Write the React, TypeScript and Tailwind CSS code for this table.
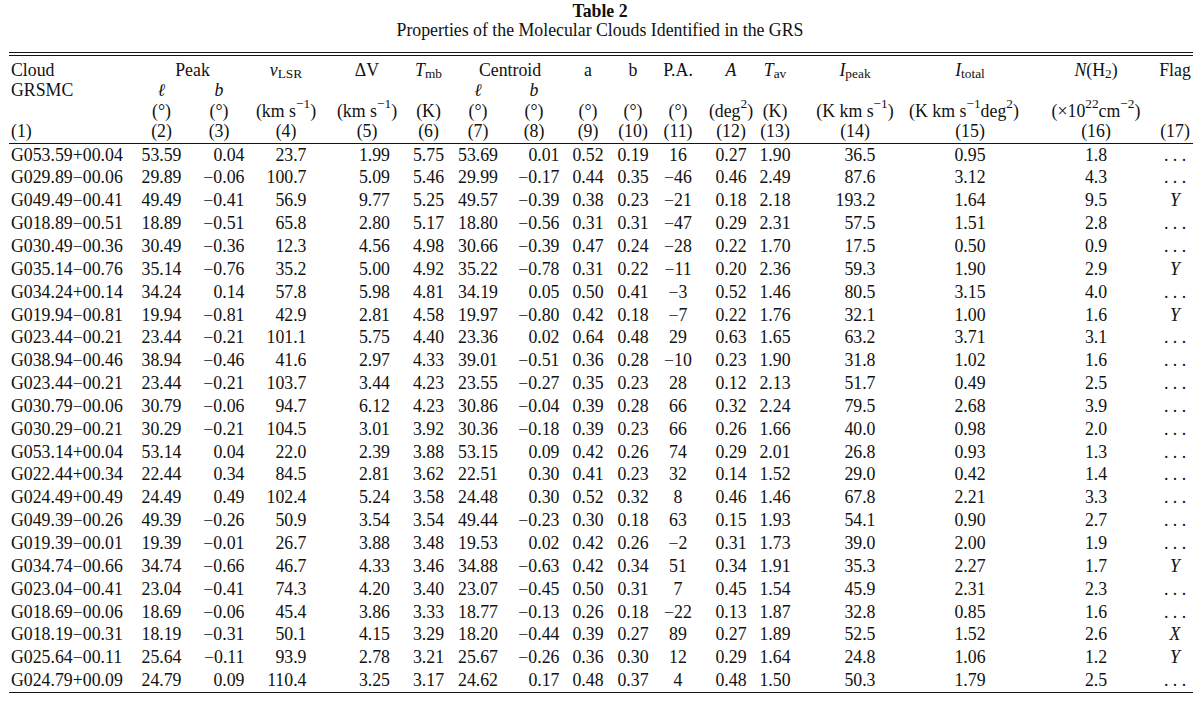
import type { ReactNode } from "react";

// column geometry: cell width + shift padding, optional fixed box for right-aligned numbers
const cols = [
  { cell: "w-[130px] pl-[11px] justify-start" },
  { cell: "w-[60px] pl-[3px] justify-center" },
  { cell: "w-[62px] pr-[4px] justify-center", box: "w-[51px]" },
  { cell: "w-[74px] pr-[6px] justify-center", box: "w-[41px]" },
  { cell: "w-[72px] pl-[10px] justify-center", box: "w-[46px]" },
  { cell: "w-[55px] pl-[6px] justify-center" },
  { cell: "w-[53px] pr-[3px] justify-center" },
  { cell: "w-[55px] pl-[1px] justify-center", box: "w-[51px]" },
  { cell: "w-[49px] pl-[5px] justify-center" },
  { cell: "w-[45px] pl-[1px] justify-center" },
  { cell: "w-[49px] pr-[3px] justify-center" },
  { cell: "w-[49px] pl-[5px] justify-center" },
  { cell: "w-[62px] pr-[18px] justify-center" },
  { cell: "w-[97px] pr-[17px] justify-center", box: "w-[41px]" },
  { cell: "w-[121px] pr-[5px] justify-center" },
  { cell: "w-[102px] pl-[24px] justify-center" },
  { cell: "w-[65px] pl-[15px] justify-center" },
];

const rows = [
  "G053.59+00.04 53.59 0.04 23.7 1.99 5.75 53.69 0.01 0.52 0.19 16 0.27 1.90 36.5 0.95 1.8 ...",
  "G029.89-00.06 29.89 -0.06 100.7 5.09 5.46 29.99 -0.17 0.44 0.35 -46 0.46 2.49 87.6 3.12 4.3 ...",
  "G049.49-00.41 49.49 -0.41 56.9 9.77 5.25 49.57 -0.39 0.38 0.23 -21 0.18 2.18 193.2 1.64 9.5 Y",
  "G018.89-00.51 18.89 -0.51 65.8 2.80 5.17 18.80 -0.56 0.31 0.31 -47 0.29 2.31 57.5 1.51 2.8 ...",
  "G030.49-00.36 30.49 -0.36 12.3 4.56 4.98 30.66 -0.39 0.47 0.24 -28 0.22 1.70 17.5 0.50 0.9 ...",
  "G035.14-00.76 35.14 -0.76 35.2 5.00 4.92 35.22 -0.78 0.31 0.22 -11 0.20 2.36 59.3 1.90 2.9 Y",
  "G034.24+00.14 34.24 0.14 57.8 5.98 4.81 34.19 0.05 0.50 0.41 -3 0.52 1.46 80.5 3.15 4.0 ...",
  "G019.94-00.81 19.94 -0.81 42.9 2.81 4.58 19.97 -0.80 0.42 0.18 -7 0.22 1.76 32.1 1.00 1.6 Y",
  "G023.44-00.21 23.44 -0.21 101.1 5.75 4.40 23.36 0.02 0.64 0.48 29 0.63 1.65 63.2 3.71 3.1 ...",
  "G038.94-00.46 38.94 -0.46 41.6 2.97 4.33 39.01 -0.51 0.36 0.28 -10 0.23 1.90 31.8 1.02 1.6 ...",
  "G023.44-00.21 23.44 -0.21 103.7 3.44 4.23 23.55 -0.27 0.35 0.23 28 0.12 2.13 51.7 0.49 2.5 ...",
  "G030.79-00.06 30.79 -0.06 94.7 6.12 4.23 30.86 -0.04 0.39 0.28 66 0.32 2.24 79.5 2.68 3.9 ...",
  "G030.29-00.21 30.29 -0.21 104.5 3.01 3.92 30.36 -0.18 0.39 0.23 66 0.26 1.66 40.0 0.98 2.0 ...",
  "G053.14+00.04 53.14 0.04 22.0 2.39 3.88 53.15 0.09 0.42 0.26 74 0.29 2.01 26.8 0.93 1.3 ...",
  "G022.44+00.34 22.44 0.34 84.5 2.81 3.62 22.51 0.30 0.41 0.23 32 0.14 1.52 29.0 0.42 1.4 ...",
  "G024.49+00.49 24.49 0.49 102.4 5.24 3.58 24.48 0.30 0.52 0.32 8 0.46 1.46 67.8 2.21 3.3 ...",
  "G049.39-00.26 49.39 -0.26 50.9 3.54 3.54 49.44 -0.23 0.30 0.18 63 0.15 1.93 54.1 0.90 2.7 ...",
  "G019.39-00.01 19.39 -0.01 26.7 3.88 3.48 19.53 0.02 0.42 0.26 -2 0.31 1.73 39.0 2.00 1.9 ...",
  "G034.74-00.66 34.74 -0.66 46.7 4.33 3.46 34.88 -0.63 0.42 0.34 51 0.34 1.91 35.3 2.27 1.7 Y",
  "G023.04-00.41 23.04 -0.41 74.3 4.20 3.40 23.07 -0.45 0.50 0.31 7 0.45 1.54 45.9 2.31 2.3 ...",
  "G018.69-00.06 18.69 -0.06 45.4 3.86 3.33 18.77 -0.13 0.26 0.18 -22 0.13 1.87 32.8 0.85 1.6 ...",
  "G018.19-00.31 18.19 -0.31 50.1 4.15 3.29 18.20 -0.44 0.39 0.27 89 0.27 1.89 52.5 1.52 2.6 X",
  "G025.64-00.11 25.64 -0.11 93.9 2.78 3.21 25.67 -0.26 0.36 0.30 12 0.29 1.64 24.8 1.06 1.2 Y",
  "G024.79+00.09 24.79 0.09 110.4 3.25 3.17 24.62 0.17 0.48 0.37 4 0.48 1.50 50.3 1.79 2.5 ...",
];

const minus = (s: string) => s.replace(/-/g, "\u2212");

const kms = (
  <>
    (km s<sup>{"\u22121"}</sup>)
  </>
);
const deg = "(\u00b0)";

const ellRow: ReactNode[] = [
  "GRSMC", <i>{"\u2113"}</i>, <i>b</i>, "", "", "", <i>{"\u2113"}</i>, <i>b</i>,
  "", "", "", "", "", "", "", "", "",
];

const unitRow: ReactNode[] = [
  "", deg, deg, kms, kms, "(K)", deg, deg, deg, deg, deg,
  <>(deg<sup>2</sup>)</>,
  "(K)",
  <>(K km s<sup>{"\u22121"}</sup>)</>,
  <>(K km s<sup>{"\u22121"}</sup> deg<sup>2</sup>)</>,
  <>({"\u00d7"}10<sup>22</sup> cm<sup>{"\u22122"}</sup>)</>,
  "",
];

const numRow: ReactNode[] = cols.map((_, i) => `(${i + 1})`);

const base = "flex shrink-0 items-center whitespace-nowrap";

const Rule = () => <div className="ml-[9px] h-px w-[1184px] bg-[#151515]" />;

const HeadRow = ({ cells, override }: { cells: ReactNode[]; override?: Record<number, string> }) => (
  <div className="flex h-[20.4px]">
    {cells.map((c, i) => (
      <div key={i} className={`${base} ${override?.[i] ?? cols[i].cell}`}>
        {c}
      </div>
    ))}
  </div>
);

export default function App() {
  return (
    <div className="w-[1200px] h-[713px] overflow-hidden bg-white pt-[1px] font-['Liberation_Serif',serif] text-[17.8px] text-[#111]">
      <div className="h-[20px] leading-[20px] text-center font-bold">Table 2</div>
      <div className="h-[19px] leading-[19px] text-center">
        Properties of the Molecular Clouds Identified in the GRS
      </div>

      <div className="mt-[12px]">
        <Rule />
      </div>
      <div className="mt-[2px]">
        <Rule />
      </div>

      {/* column heads */}
      <div className="mt-[4px]">
        <div className="flex h-[20.4px]">
          <div className={`${base} ${cols[0].cell}`}>Cloud</div>
          <div className={`${base} w-[122px] pl-[3px] justify-center`}>Peak</div>
          <div className={`${base} ${cols[3].cell}`}>
            <i>v</i>
            <sub>LSR</sub>
          </div>
          <div className={`${base} ${cols[4].cell}`}>{"\u0394V"}</div>
          <div className={`${base} ${cols[5].cell}`}>
            <i>T</i>
            <sub>mb</sub>
          </div>
          <div className={`${base} w-[108px] pl-[6px] justify-center`}>Centroid</div>
          <div className={`${base} ${cols[8].cell}`}>a</div>
          <div className={`${base} ${cols[9].cell}`}>b</div>
          <div className={`${base} ${cols[10].cell}`}>P.A.</div>
          <div className={`${base} ${cols[11].cell}`}>
            <i>A</i>
          </div>
          <div className={`${base} ${cols[12].cell}`}>
            <i>T</i>
            <sub>av</sub>
          </div>
          <div className={`${base} ${cols[13].cell}`}>
            <i>I</i>
            <sub>peak</sub>
          </div>
          <div className={`${base} ${cols[14].cell}`}>
            <i>I</i>
            <sub>total</sub>
          </div>
          <div className={`${base} ${cols[15].cell}`}>
            <i>N</i>(H<sub>2</sub>)
          </div>
          <div className={`${base} ${cols[16].cell}`}>Flag</div>
        </div>
        <HeadRow cells={ellRow} />
        <HeadRow cells={unitRow} override={{ 14: "w-[121px] pr-[17px] justify-center" }} />
        <HeadRow cells={numRow} />
      </div>

      <div className="mt-[1px]">
        <Rule />
      </div>

      {/* data */}
      <div>
        {rows.map((row, r) => (
          <div key={r} className="flex h-[22.85px]">
            {row.split(" ").map((v, i) => {
              const c = cols[i];
              let content: ReactNode = minus(v);
              if (i === 16) content = v === "..." ? ". . ." : <i>{v}</i>;
              return (
                <div key={i} className={`${base} ${c.cell}`}>
                  {c.box ? <span className={`inline-block text-right ${c.box}`}>{content}</span> : content}
                </div>
              );
            })}
          </div>
        ))}
      </div>

      <Rule />
    </div>
  );
}
